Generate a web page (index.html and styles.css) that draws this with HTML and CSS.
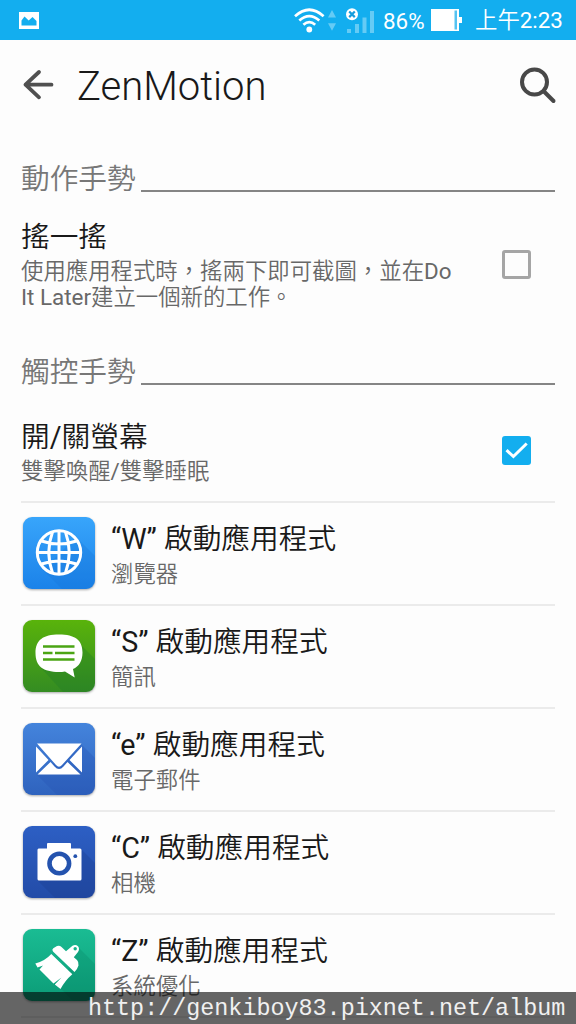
FILE: index.html
```html
<!DOCTYPE html>
<html lang="zh-Hant">
<head>
<meta charset="utf-8">
<title>ZenMotion</title>
<link rel="stylesheet" href="styles.css">
</head>
<body>
<div class="screen">
  <header class="status">
    <svg class="status-photo" width="20" height="17" viewBox="0 0 20 17"><rect width="20" height="17" fill="#fff"/><path d="M2.500 13.500V8.500L5.500 4.500 9.700 8.500 13.500 5 17.500 9V13.500Z" fill="#13aeef"/></svg>
    <svg class="status-wifi" width="42" height="26" viewBox="0 0 42 26"><g fill="none" stroke="#fff" stroke-width="2.7"><path d="M1 8.2Q15.300 -4.700 29.600 8.200"/><path d="M5.300 12.400Q15.300 3.700 25.300 12.400"/><path d="M9.400 16.800Q15.300 11.500 21.200 16.800"/></g><circle cx="15.300" cy="21.500" r="2.900" fill="#fff"/><path d="M38 2L42 9.500H34ZM34 15.300H42L38 22.800Z" fill="#65cbf5"/></svg>
    <svg class="status-signal" width="28" height="26" viewBox="0 0 28 26"><g fill="#65cbf5"><rect x="1" y="21" width="4" height="4"/><rect x="9" y="16" width="4" height="9"/><rect x="16.500" y="9.500" width="4" height="15.500"/><rect x="24" y="3" width="4" height="22"/></g><circle cx="6" cy="6.300" r="6" fill="#fff"/><path d="M3.200 3.500L8.800 9.100M8.800 3.500L3.200 9.100" stroke="#159ddd" stroke-width="2.200"/></svg>
    <span class="status-percent">86%</span>
    <svg class="status-battery" width="31" height="22" viewBox="0 0 31 22"><rect width="28" height="22" fill="#fff"/><rect x="23.500" y="1.500" width="2.500" height="19" fill="#55c3f1"/><rect x="28" y="8" width="3" height="6" fill="#fff"/></svg>
    <span class="status-time">上午<span class="latin">2:23</span></span>
  </header>
  <div class="bar">
    <svg class="back" width="32" height="32" viewBox="0 0 32 32"><path d="M17 3L3.500 15.700 17 28.300M3.500 15.700H29.500" fill="none" stroke="#505050" stroke-width="3.800" stroke-linecap="round" stroke-linejoin="round"/></svg>
    <h1 class="bar-title">ZenMotion</h1>
    <svg class="search" width="38" height="38" viewBox="0 0 38 38"><circle cx="15.500" cy="16" r="12.500" fill="none" stroke="#484848" stroke-width="4"/><path d="M25 25.500L34.500 35" stroke="#484848" stroke-width="4" stroke-linecap="round"/></svg>
  </div>
  <main class="content">
    <h2 class="section"><span>動作手勢</span><i class="rule"></i></h2>
    <div class="option option-shake">
      <div class="option-text">
        <div class="title">搖一搖</div>
        <div class="summary">使用應用程式時，搖兩下即可截圖，並在<span class="latin">Do<br>It Later</span>建立一個新的工作。</div>
      </div>
      <span class="check"></span>
    </div>
    <h2 class="section"><span>觸控手勢</span><i class="rule"></i></h2>
    <div class="option option-screen">
      <div class="option-text">
        <div class="title">開<span class="latin">/</span>關螢幕</div>
        <div class="summary">雙擊喚醒<span class="latin">/</span>雙擊睡眠</div>
      </div>
      <span class="check checked"><svg width="29" height="29" viewBox="0 0 29 29"><path d="M4.500 14.200L11.400 20.500 24.700 7.500" fill="none" stroke="#fff" stroke-width="3"/></svg></span>
    </div>
    <div class="app">
      <svg class="icon" viewBox="0 0 72 72"><defs><linearGradient id="web" x2="0" y2="1"><stop stop-color="#38a5fb"/><stop offset="1" stop-color="#1b82e9"/></linearGradient></defs><rect width="72" height="72" rx="9" fill="url(#web)"/><path d="M53 20L72 39V63Q72 72 63 72H39L20 53Z" fill="#136fd5" opacity=".25"/><g fill="none" stroke="#fff" stroke-width="3"><circle cx="36" cy="35.500" r="21.700"/><path d="M29.500 15Q22 35.500 29.500 56M42.500 15Q50 35.500 42.500 56M36 14V57M14 35.500H58M18.500 24Q36 30 53.500 24M18.500 47Q36 41 53.500 47"/></g></svg>
      <div class="app-text"><div class="title"><span class="latin">“W” </span>啟動應用程式</div><div class="summary">瀏覽器</div></div>
    </div>
    <div class="app">
      <svg class="icon" viewBox="0 0 72 72"><defs><linearGradient id="sms" x2="0" y2="1"><stop stop-color="#59b30b"/><stop offset="1" stop-color="#348c22"/></linearGradient></defs><rect width="72" height="72" rx="9" fill="url(#sms)"/><path d="M55 22L72 39V63Q72 72 63 72H40L18 48Z" fill="#18782a" opacity=".28"/><path d="M36 14.500C52 14.500 59.500 20 59.500 32.500 59.500 41 56 46.500 50 49L51.700 57.500 42 51.500Q39 52 36 52C20 52 12.500 46 12.500 33 12.500 20 20 14.500 36 14.500Z" fill="#fff"/><path d="M20 26.500H51.500M20 33H29.500M32 33H51.500M20 39.500H51.500" stroke="#4ba514" stroke-width="2.600"/></svg>
      <div class="app-text"><div class="title"><span class="latin">“S” </span>啟動應用程式</div><div class="summary">簡訊</div></div>
    </div>
    <div class="app">
      <svg class="icon" viewBox="0 0 72 72"><defs><linearGradient id="mail" x2="0" y2="1"><stop stop-color="#4484dc"/><stop offset="1" stop-color="#2f63be"/></linearGradient></defs><rect width="72" height="72" rx="9" fill="url(#mail)"/><path d="M58 21L72 35V63Q72 72 63 72H34L14 52Z" fill="#254fb0" opacity=".28"/><path d="M14 20.500H58.500L39 42Q36 45.500 33 42ZM13 23.500L25.500 37 13 49.500ZM59 23.500V49.500L46.500 37ZM27.500 39L31.500 43.500Q36 48.500 40.500 43.500L44.500 39 57.500 51.500H14.500Z" fill="#fff"/></svg>
      <div class="app-text"><div class="title"><span class="latin">“e” </span>啟動應用程式</div><div class="summary">電子郵件</div></div>
    </div>
    <div class="app">
      <svg class="icon" viewBox="0 0 72 72"><defs><linearGradient id="camera" x2="0" y2="1"><stop stop-color="#2d5fc4"/><stop offset="1" stop-color="#234ca8"/></linearGradient></defs><rect width="72" height="72" rx="9" fill="url(#camera)"/><path d="M58 23L72 37V63Q72 72 63 72H32L14 54Z" fill="#183887" opacity=".28"/><path d="M15.500 22.500H24V18Q24 17 25 17H47Q48 17 48 18V22.500H57Q58.500 22.500 58.500 24V53Q58.500 54.500 57 54.500H16Q14.500 54.500 14.500 53V23.500Z" fill="#fff"/><circle cx="36.300" cy="37.500" r="9.800" fill="#fff" stroke="#2453ae" stroke-width="4.600"/><circle cx="52.300" cy="30.200" r="1.900" fill="#2453ae"/></svg>
      <div class="app-text"><div class="title"><span class="latin">“C” </span>啟動應用程式</div><div class="summary">相機</div></div>
    </div>
    <div class="app app-last">
      <svg class="icon" viewBox="0 0 72 72"><defs><linearGradient id="clean" x2="0" y2="1"><stop stop-color="#1abc93"/><stop offset="1" stop-color="#0c9c77"/></linearGradient></defs><rect width="72" height="72" rx="9" fill="url(#clean)"/><path d="M55 18L72 35V63Q72 72 63 72H50L37 59Z" fill="#078564" opacity=".28"/><path d="M30.300 19.200L34 17Q36.500 16 38.500 18L43 22.200 49.500 16.800Q52.500 15 55 17.300 57 20 55 23L50.800 28.200 54 31Q56 33 55.500 36.500 54.500 40 51.500 43L30 22.500Q28.500 20.500 30.300 19.200Z" fill="#fff"/><path d="M28.300 25L49.300 45.200Q42 51.500 37.500 60L31.800 55.500 38.500 48.500 30.500 54.500 16.500 40.500 20 36.500 14.500 38.500 12.300 34.500Q22 32 28.300 25Z" fill="#fff"/><circle cx="52.200" cy="19.800" r="1.700" fill="#16b28a"/></svg>
      <div class="app-text"><div class="title"><span class="latin">“Z” </span>啟動應用程式</div><div class="summary">系統優化</div></div>
    </div>
  </main>
  <div class="watermark">http://genkiboy83.pixnet.net/album</div>
</div>
</body>
</html>
```
FILE: styles.css
```css
* { box-sizing: border-box; }
body { margin: 0; }
.screen {
  position: relative;
  width: 576px;
  height: 1024px;
  overflow: hidden;
  background: #fdfdfd;
  color: #191919;
  font-family: Roboto, "Noto Sans CJK TC", sans-serif;
  font-weight: 350;
}
svg { display: block; flex: none; }
.latin { font-weight: 400; }
.status {
  display: flex;
  align-items: flex-start;
  height: 40px;
  padding-left: 19px;
  background: #13aeef;
  color: #fff;
  white-space: nowrap;
}
.status-photo { margin-top: 12px; }
.status-wifi { margin: 8px 0 0 255px; }
.status-signal { margin: 8px 0 0 10px; }
.status-percent { width: 42px; margin: 8px 0 0 9px; font-size: 22.4px; line-height: 26px; font-weight: 400; }
.status-battery { margin: 9px 0 0 6px; }
.status-time { margin: 7px 0 0 13px; font-size: 22.4px; line-height: 26px; }
.bar { display: flex; height: 90px; padding: 0 19px 0 22px; }
.back { margin-top: 29px; }
.bar-title { flex: 1; margin: 23px 0 0 23px; font-size: 40px; line-height: 48px; font-weight: 300; }
.search { margin-top: 26px; }
.content { padding: 37px 21px 0; }
.section {
  display: flex;
  height: 40px;
  margin: 0;
  color: #777;
  font-size: 28.7px;
  line-height: 40px;
  font-weight: 350;
  white-space: nowrap;
}
.section span { width: 120px; margin-top: -8px; }
.rule { flex: 1; height: 2px; margin-top: 23px; background: #858585; }
.option { display: flex; justify-content: space-between; padding-right: 24px; white-space: nowrap; }
.option-shake { height: 153px; padding-top: 10px; }
.option-screen { height: 101px; padding-top: 17px; }
.title { height: 41px; font-size: 28.7px; line-height: 40px; }
.summary { color: #686868; font-size: 22.4px; line-height: 26px; }
.check { width: 29px; height: 29px; margin-top: 33px; border: 3px solid #a5a5a5; border-radius: 3px; }
.checked { margin-top: 19px; border: 0; background: #13aeef; }
.app { display: flex; height: 103px; padding: 14px 0 0 2px; border-top: 2px solid #ebebeb; white-space: nowrap; }
.app-last { height: 105px; border-bottom: 2px solid #ebebeb; }
.icon { width: 72px; height: 72px; filter: drop-shadow(0 1px 1px #0005); }
.app-text { margin: 2px 0 0 16px; }
.app .summary { margin-top: 1px; }
.watermark {
  position: absolute;
  right: 0;
  bottom: 0;
  left: 0;
  height: 32px;
  padding-left: 88px;
  background: rgba(0, 0, 0, .6);
  color: #f0f0f0;
  font: 23.4px/34px "Liberation Mono", monospace;
  white-space: nowrap;
}
```
